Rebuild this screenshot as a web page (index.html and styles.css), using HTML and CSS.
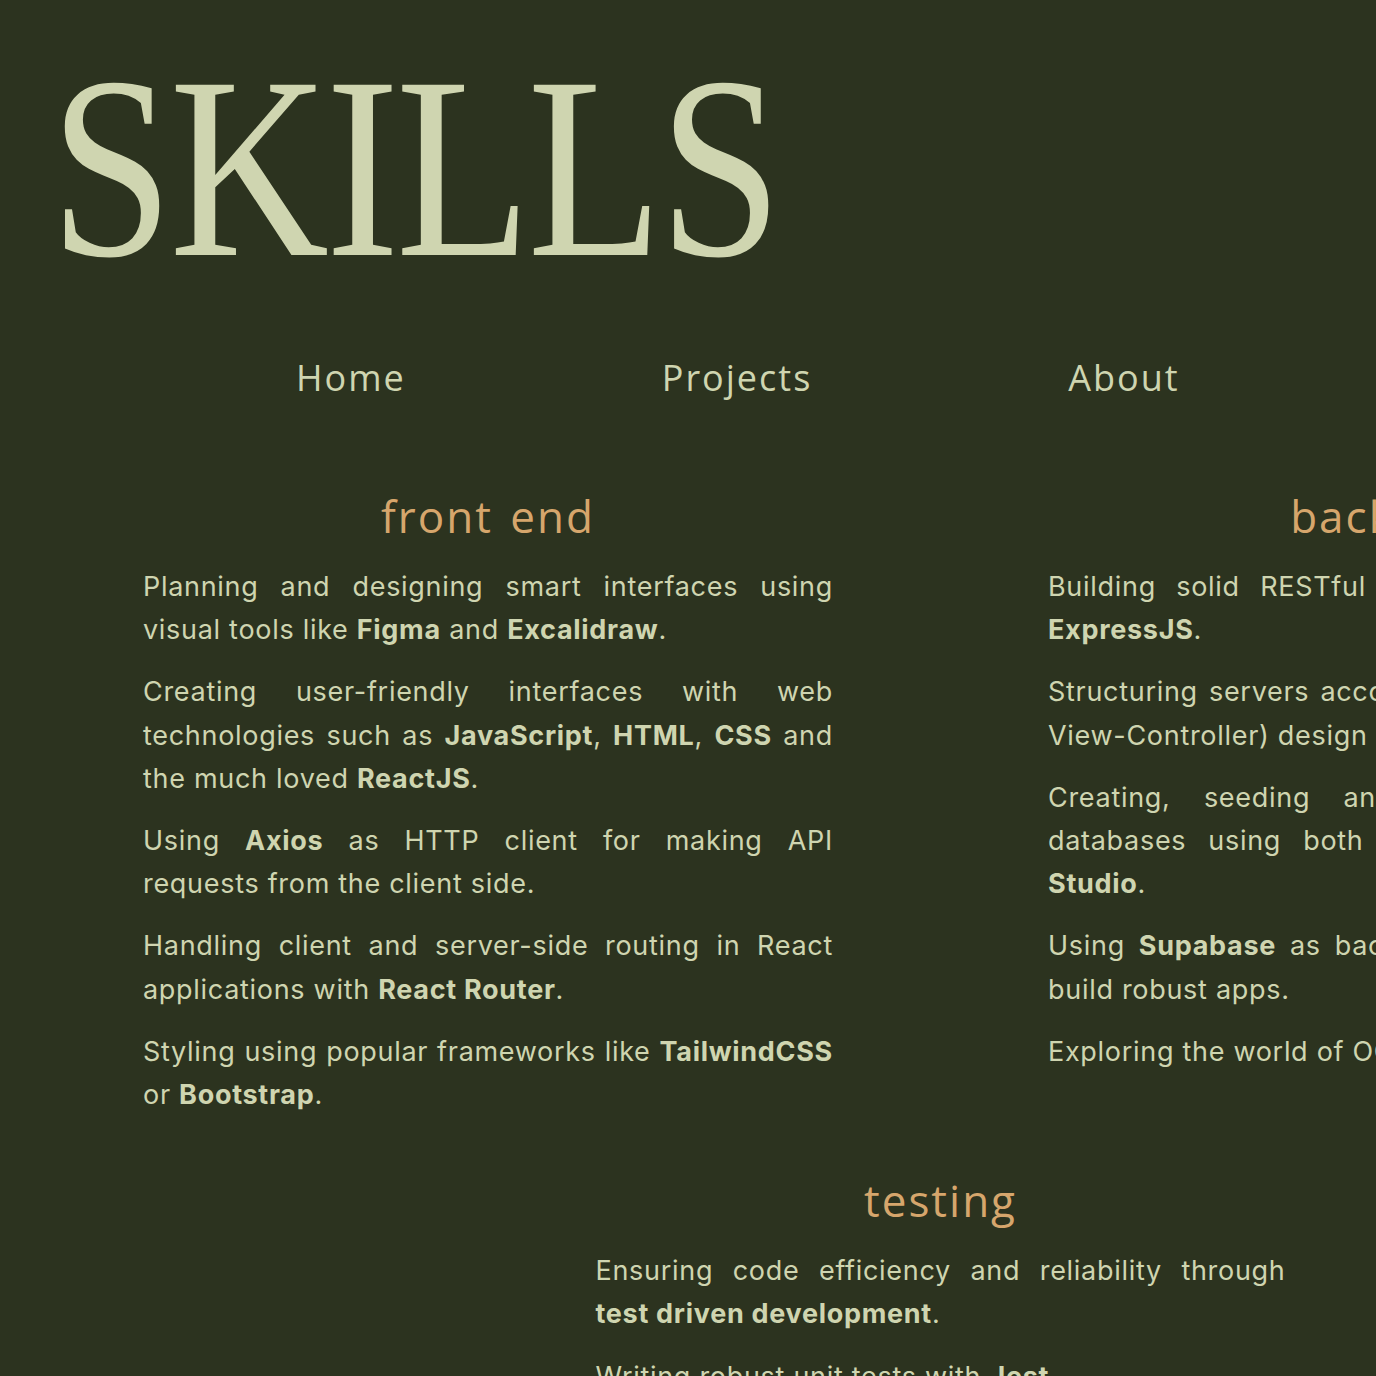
FILE: index.html
```html
<!DOCTYPE html>
<html lang="en">
<head>
<meta charset="utf-8">
<title>Skills</title>
<link rel="stylesheet" href="styles.css">
</head>
<body>
<div class="page">
  <header class="header">
    <h1 class="title">SKILLS</h1>
    <nav class="nav">
      <a class="nav-link" href="#">Home</a>
      <a class="nav-link" href="#">Projects</a>
      <a class="nav-link" href="#">About</a>
      <a class="nav-link" href="#">Contact</a>
    </nav>
  </header>
  <main class="skills">
    <div class="columns">
      <section class="skill">
        <h2 class="skill-title">front end</h2>
        <p>Planning and designing smart interfaces using visual tools like <b>Figma</b> and <b>Excalidraw</b>.</p>
        <p>Creating user-friendly interfaces with web technologies such as <b>JavaScript</b>, <b>HTML</b>, <b>CSS</b> and the much loved <b>ReactJS</b>.</p>
        <p>Using <b>Axios</b> as HTTP client for making API requests from the client side.</p>
        <p>Handling client and server-side routing in React applications with <b>React Router</b>.</p>
        <p>Styling using popular frameworks like <b>TailwindCSS</b> or <b>Bootstrap</b>.</p>
      </section>
      <section class="skill">
        <h2 class="skill-title">back end</h2>
        <p>Building solid RESTful APIs using <b>NodeJS</b> and <b>ExpressJS</b>.</p>
        <p>Structuring servers according to the MVC (Model-View-Controller) design pattern.</p>
        <p>Creating, seeding and maintaining relational databases using both <b>PostgreSQL</b> and <b>Prisma Studio</b>.</p>
        <p>Using <b>Supabase</b> as backend-as-a-service tool to build robust apps.</p>
        <p>Exploring the world of OOP.</p>
      </section>
    </div>
    <section class="skill skill-center">
      <h2 class="skill-title">testing</h2>
      <p>Ensuring code efficiency and reliability through <b>test driven development</b>.</p>
      <p>Writing robust unit tests with <b>Jest</b>.</p>
      <p>Integration testing of API endpoints with <b>Supertest</b>.</p>
    </section>
  </main>
</div>
</body>
</html>
```

FILE: styles.css
```css
html, body {
  margin: 0;
  padding: 0;
  background: #2c331f;
  overflow-x: hidden;
}

.page {
  width: 1881px;
  color: #cfd5b0;
  font-family: "Inter", "Liberation Sans", sans-serif;
}

.header {
  display: flex;
  flex-direction: column;
  padding-top: 37px;
}

.title {
  margin: 0 0 0 50px;
  font-family: "Liberation Serif", serif;
  font-weight: 400;
  font-size: 260px;
  line-height: 260px;
  color: #cfd5b0;
  transform: scaleX(0.85);
  transform-origin: left center;
  letter-spacing: -4px;
}

.nav {
  display: flex;
  gap: 256px;
  padding-left: 296px;
  margin-top: 59px;
}

.nav-link {
  font-family: "Open Sans", sans-serif;
  font-size: 36px;
  line-height: 43px;
  letter-spacing: 2px;
  color: #cfd5b0;
  text-decoration: none;
}

.skills {
  display: flex;
  flex-direction: column;
  align-items: center;
  padding-top: 91px;
}

.columns {
  display: grid;
  grid-template-columns: 690px 690px;
  column-gap: 215px;
}

.skill {
  width: 690px;
}

.skill-title {
  margin: 0 0 22px;
  text-align: center;
  font-family: "Open Sans", sans-serif;
  font-weight: 400;
  font-size: 44px;
  line-height: 53px;
  letter-spacing: 2px;
  word-spacing: 4px;
  color: #d6a66c;
}

.skill p {
  margin: 0 0 19px;
  font-size: 27px;
  line-height: 43.2px;
  letter-spacing: 0.7px;
  text-align: justify;
}

.skill b {
  font-weight: 700;
}

.skill-center {
  margin-top: 39px;
}
```
